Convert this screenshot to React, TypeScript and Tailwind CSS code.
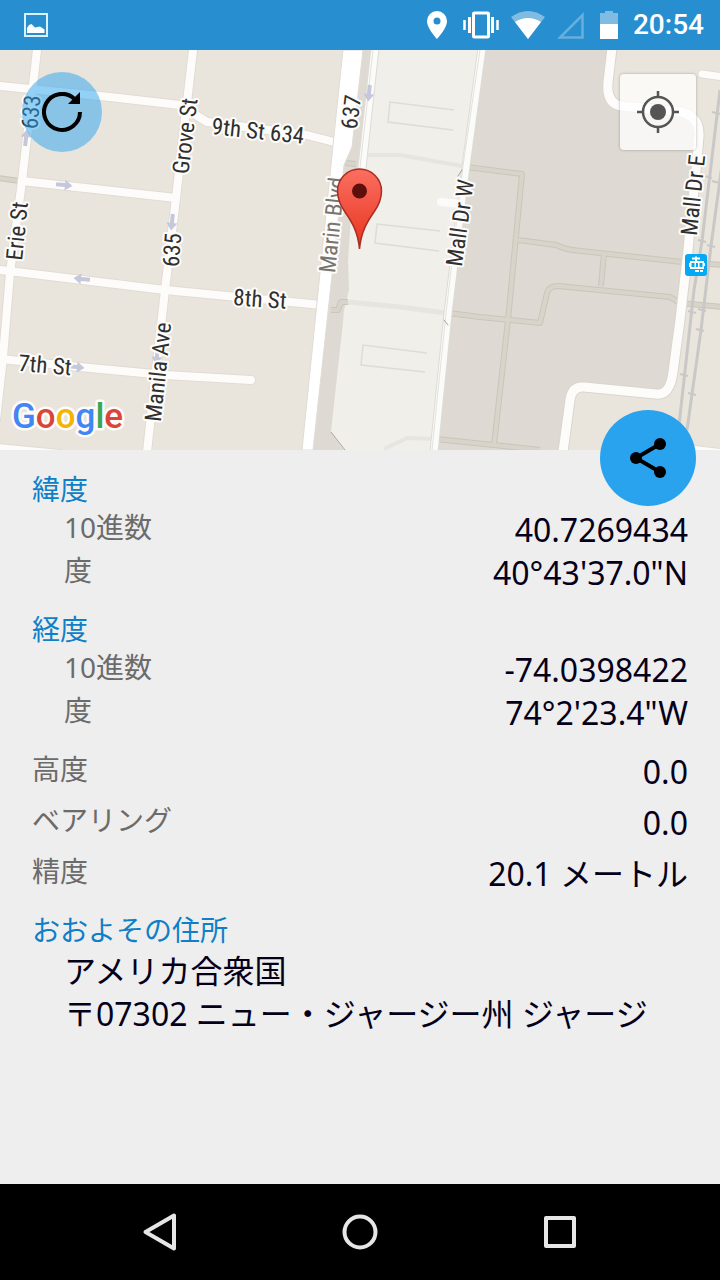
import React from "react";

type MapLabel = { text: string; x: number; y: number; angle: number; faded?: boolean };

const labels: MapLabel[] = [
  { text: "633", x: 31, y: 112, angle: -84 },
  { text: "Grove St", x: 185, y: 136, angle: -83 },
  { text: "9th St 634", x: 258, y: 131, angle: 6 },
  { text: "637", x: 351, y: 112, angle: -83 },
  { text: "Marin Blvd", x: 332, y: 225, angle: -84, faded: true },
  { text: "Mall Dr W", x: 460, y: 223, angle: -82 },
  { text: "Mall Dr E", x: 693, y: 195, angle: -84 },
  { text: "Erie St", x: 17, y: 231, angle: -84 },
  { text: "635", x: 172, y: 250, angle: -86 },
  { text: "8th St", x: 260, y: 299, angle: 4 },
  { text: "7th St", x: 45, y: 365, angle: 5 },
  { text: "Manila Ave", x: 158, y: 372, angle: -84 },
];

const roads: string[] = [
  "M37 50L22 181L10 273L3 357L-4 420",
  "M0 86L110 97L180 105L207 122L307 135L338 143",
  "M22 181L176 198",
  "M193 50L176 198L165 290L147 452",
  "M0 270L165 290L322 305",
  "M0 359L90 368L165 375L251 380",
  "M-4 448L60 454",
];

const mallRoad =
  "M612 48L608 82Q606 104 622 106L676 111Q700 114 699 136L696 170L688 250L680 320L673 372Q670 396 656 394L584 387Q572 386 570 400L563 452";

const footpaths: string[] = [
  "M-2 178L20 181",
  "M466 167L522 174L508 320L494 445",
  "M518 240L556 245Q564 249 572 250L682 262L722 265",
  "M604 253L601 286",
  "M448 313L480 317L540 323L547 293Q549 286 558 286L670 297L680 303L722 307",
  "M436 439L494 445L540 450",
  "M345 163L356 164",
  "M331 310L338 310L341 302L348 302",
];

const arrows = [
  { x: 64, y: 185, angle: 6 },
  { x: 172, y: 222, angle: 96 },
  { x: 82, y: 279, angle: 186 },
  { x: 76, y: 367, angle: 6 },
  { x: 26, y: 138, angle: -84 },
  { x: 369, y: 93, angle: 96 },
  { x: 157, y: 356, angle: 96 },
];

const railTicks = [
  [716, 113], [708, 177], [716, 182], [702, 241], [711, 246], [692, 312],
  [700, 330], [684, 375], [692, 394], [702, 310],
];

function StreetMap() {
  return (
    <svg
      viewBox="0 50 720 400"
      preserveAspectRatio="xMidYMid slice"
      className="block h-full w-full"
      role="img"
      aria-label="地図"
    >
      <rect x="-400" y="50" width="1520" height="400" fill="#e9e5dc" />
      <path d="M362 50H612L608 82Q606 104 622 106L676 111Q700 114 699 136L688 250L673 372Q670 396 656 394L584 387Q572 386 570 400L563 450H308L330 200L344 165Z" fill="#dedad3" />
      <path d="M376 50H484L434 450H344L331 432L343 322L344 310L349 290L348 262L352 200L362 160Z" fill="#f0efea" />
      <path d="M331 432L345 450" stroke="#aaa8a3" fill="none" />

      <g fill="none" stroke="#dddcd6" strokeWidth="1.5">
        <path d="M454 110L390 102L388 122L453 130" />
        <path d="M440 231L377 224L375 243L439 251" />
        <path d="M427 353L363 345L361 365L425 372" />
      </g>
      <path d="M368 155L400 155L462 166" stroke="#e6e5df" strokeWidth="4" fill="none" />
      <path d="M348 302L400 307L446 313" stroke="#e6e5df" strokeWidth="5" fill="none" />
      <path d="M384 449L407 438L434 439" stroke="#e6e5df" strokeWidth="4" fill="none" />

      <g fill="none" strokeLinejoin="round">
        {footpaths.map((d) => (
          <path key={d} d={d} stroke="#c8c6ba" strokeWidth="6" />
        ))}
        {footpaths.map((d) => (
          <path key={d} d={d} stroke="#d8d4ca" strokeWidth="4" />
        ))}
      </g>

      <g fill="none" stroke="#c9c8c6" strokeWidth="3">
        <path d="M720 90L702 241L694 290L679 425" />
        <path d="M724 150L711 246L701 330L687 430" />
        {railTicks.map(([x, y]) => (
          <path key={`${x}-${y}`} d={`M${x - 4} ${y - 1}L${x + 4} ${y + 1}`} strokeWidth="2" />
        ))}
      </g>

      <g fill="none" strokeLinejoin="round" strokeLinecap="round">
        {roads.map((d) => (
          <path key={d} d={d} stroke="#e0dcd3" strokeWidth="10" />
        ))}
        <path d={mallRoad} stroke="#d9d5cd" strokeWidth="11" />
        <path d="M702 74L724 77M690 449L724 453" stroke="#e0dcd3" strokeWidth="9" />
        {roads.map((d) => (
          <path key={d} d={d} stroke="#fdfcfa" strokeWidth="8" />
        ))}
        <path d={mallRoad} stroke="#fdfcfa" strokeWidth="9" />
        <path d="M702 74L724 77M690 449L724 453" stroke="#fdfcfa" strokeWidth="7" />
        <path d="M375 48L362 168M482 48L466 166L448 313L434 452" stroke="#dddbd5" strokeWidth="9" />
        <path d="M375 48L362 168M482 48L466 166L448 313L434 452" stroke="#fbfbf9" strokeWidth="7" />
        <path d="M373 50L360 168M480 50L463 166L446 313L432 450" stroke="#e3e1db" />
        <path d="M441 202L460 204" stroke="#fbfbf9" strokeWidth="8" />
        <path d="M444 320L448 325M458 176L462 170" stroke="#a5a39e" />
      </g>
      <path d="M343 50H363L352 147L344 165L313 450H302L331 165L333 145Z" fill="#ffffff" stroke="#e0dcd5" />

      {arrows.map(({ x, y, angle }) => (
        <path
          key={`${x}-${y}`}
          d="M-8 -2H1V-5.500L8.500 0L1 5.500V2H-8Z"
          fill="#c5c7da"
          transform={`translate(${x} ${y}) rotate(${angle})`}
        />
      ))}

      <g
        fontFamily="'Roboto Condensed', Roboto, sans-serif"
        fontSize="23"
        textAnchor="middle"
        stroke="#fdfcfa"
        strokeWidth="4"
        strokeLinejoin="round"
        paintOrder="stroke"
      >
        {labels.map(({ text, x, y, angle, faded }) => (
          <text
            key={text}
            y="8"
            fill={faded ? "#77756f" : "#2f2f2f"}
            transform={`translate(${x} ${y}) rotate(${angle})`}
          >
            {text}
          </text>
        ))}
      </g>

      <g>
        <rect x="685" y="254" width="22" height="22" rx="3" fill="#03a9f4" />
        <path d="M692 258.500H700M696 256.500V262" stroke="#fff" strokeWidth="2" />
        <path d="M690 261H704V263H705V266H704V269H690V267H689V263H690Z" fill="#fff" />
        <path d="M691.500 263H694.500V267H691.500ZM696 263H698V267H696ZM699.500 263H702.500V267H699.500Z" fill="#03a9f4" />
        <path d="M695 271H699M700 271H703" stroke="#fff" strokeWidth="2" />
      </g>

      <defs>
        <linearGradient id="pin" x1="0" y1="0" x2="0" y2="1">
          <stop offset="0" stopColor="#fb6f60" />
          <stop offset="1" stopColor="#e8331f" />
        </linearGradient>
      </defs>
      <path
        d="M359.500 249C358 232 352 222 345 212C340 205 337.500 199 337.500 191A22 22 0 0 1 381.500 191C381.500 199 379 205 374 212C367 222 361 232 359.500 249Z"
        fill="url(#pin)"
        stroke="#a82d22"
        strokeWidth="1.500"
      />
      <circle cx="359.500" cy="191" r="7.500" fill="#5c0f0b" />

      <text
        x="12"
        y="428"
        fontFamily="Roboto, sans-serif"
        fontSize="35"
        fontWeight="500"
        stroke="#fdfcfa"
        strokeWidth="5"
        strokeLinejoin="round"
        paintOrder="stroke"
      >
        <tspan fill="#4285f4">G</tspan>
        <tspan fill="#db4437">o</tspan>
        <tspan fill="#f4b400">o</tspan>
        <tspan fill="#4285f4">g</tspan>
        <tspan fill="#3aa757">l</tspan>
        <tspan fill="#db4437">e</tspan>
      </text>
    </svg>
  );
}

function StatusBar() {
  return (
    <header className="flex h-[50px] shrink-0 items-center justify-between bg-[#278ecf] pr-4 pl-6 text-white">
      <svg className="size-6" viewBox="0 0 24 24" aria-hidden="true">
        <rect x="1" y="1" width="22" height="22" fill="none" stroke="#d9f1fb" strokeWidth="2" />
        <path d="M3 20V15L5 12L7.500 11L11 14.500L16 13.500L20.500 16.500V20Z" fill="#fff" />
      </svg>
      <div className="flex items-center gap-3">
        <svg className="h-7 w-7" viewBox="0 0 28 28" aria-hidden="true">
          <path fillRule="evenodd" d="M14 0A10 10 0 0 0 4 10C4 17.500 14 28 14 28S24 17.500 24 10A10 10 0 0 0 14 0ZM14 6.500A3.500 3.500 0 1 1 14 13.500A3.500 3.500 0 0 1 14 6.500Z" fill="#fff" />
        </svg>
        <svg className="h-7 w-9" viewBox="0 0 36 28" fill="none" stroke="#fff" aria-hidden="true">
          <rect x="10.500" y="2" width="15" height="24" rx="1" strokeWidth="3" />
          <path d="M6.500 6V22M29.500 6V22" strokeWidth="3" />
          <path d="M1.500 9V19M34.500 9V19" strokeWidth="2.500" />
        </svg>
        <svg className="h-7 w-[34px]" viewBox="0 0 34 28" aria-hidden="true">
          <path d="M0 6Q17 -6 34 6L17 28Z" fill="#80bbe2" />
          <path d="M4 11Q17 3 30 11L17 28Z" fill="#fff" />
        </svg>
        <svg className="h-7 w-7" viewBox="0 0 28 28" aria-hidden="true">
          <path d="M3 26.500H25.500V4Z" fill="none" stroke="#68aede" strokeWidth="2.500" />
        </svg>
        <svg className="h-7 w-6" viewBox="0 0 24 28" aria-hidden="true">
          <path d="M3 2H8V-1H16V2H21V14H3Z" fill="#80bbe2" />
          <path d="M3 13H21V28H3Z" fill="#fff" />
        </svg>
        <time className="font-['Roboto',sans-serif] text-[28px] leading-8 font-medium">20:54</time>
      </div>
    </header>
  );
}

function Heading({ children }: { children: React.ReactNode }) {
  return <h2 className="text-[28px] leading-[38px] text-[#0f7fc8]">{children}</h2>;
}

function Row({ label, value }: { label: string; value: string }) {
  return (
    <div className="flex h-[43px] items-start justify-between">
      <dt className="text-[28px] leading-[38px] text-[#6b6b6b]">{label}</dt>
      <dd className="text-[32px] leading-[43px] text-[#050019]">{value}</dd>
    </div>
  );
}

export default function App() {
  return (
    <div className="flex min-h-screen flex-col bg-[#eeeeee] font-['Noto_Sans','Noto_Sans_CJK_JP',sans-serif]" lang="ja">
      <StatusBar />
      <section className="relative h-[400px] shrink-0">
        <StreetMap />
        <button
          type="button"
          aria-label="更新"
          className="absolute top-[22px] left-[22px] flex size-20 items-center justify-center rounded-full bg-[#2aa3ef]/50"
        >
          <svg className="size-10" viewBox="0 0 40 40" aria-hidden="true">
            <path d="M38 20A18 18 0 1 1 32 6.500" fill="none" stroke="#000" strokeWidth="4" />
            <path d="M38 0V12H26Z" fill="#000" />
          </svg>
        </button>
        <button
          type="button"
          aria-label="現在地"
          className="absolute top-6 right-6 flex size-[76px] items-center justify-center rounded-sm bg-white/75 shadow-[0_0_3px_rgba(0,0,0,0.3)]"
        >
          <svg className="size-[42px]" viewBox="0 0 42 42" fill="none" stroke="#555" aria-hidden="true">
            <circle cx="21" cy="21" r="15" strokeWidth="2.500" />
            <circle cx="21" cy="21" r="8" fill="#555" stroke="none" />
            <path d="M21 0V6M21 36V42M0 21H6M36 21H42" strokeWidth="2.500" />
          </svg>
        </button>
        <button
          type="button"
          aria-label="共有"
          className="absolute right-6 -bottom-14 flex size-24 items-center justify-center rounded-full bg-[#2aa3ef]"
        >
          <svg className="h-10 w-9" viewBox="0 0 36 40" aria-hidden="true">
            <path d="M30 6L6 20L30 34" fill="none" stroke="#000" strokeWidth="4" />
            <circle cx="30" cy="6" r="6" />
            <circle cx="6" cy="20" r="6" />
            <circle cx="30" cy="34" r="6" />
          </svg>
        </button>
      </section>

      <main className="flex grow flex-col gap-4 px-8 pt-5 pb-8">
        <section>
          <Heading>緯度</Heading>
          <dl className="pl-8">
            <Row label="10進数" value="40.7269434" />
            <Row label="度" value={"40°43'37.0\"N"} />
          </dl>
        </section>
        <section>
          <Heading>経度</Heading>
          <dl className="pl-8">
            <Row label="10進数" value="-74.0398422" />
            <Row label="度" value={"74°2'23.4\"W"} />
          </dl>
        </section>
        <dl className="flex flex-col gap-2">
          <Row label="高度" value="0.0" />
          <Row label="ベアリング" value="0.0" />
          <Row label="精度" value="20.1 メートル" />
        </dl>
        <section>
          <Heading>おおよその住所</Heading>
          <address className="pl-8 text-[32px] leading-[43px] whitespace-nowrap text-[#050019] not-italic">
            アメリカ合衆国
            <br />
            〒07302 ニュー・ジャージー州 ジャージ
          </address>
        </section>
      </main>

      <nav className="grid h-24 shrink-0 grid-cols-3 bg-black px-[60px]">
        <button type="button" aria-label="戻る" className="flex items-center justify-center">
          <svg className="size-10" viewBox="0 0 40 40" fill="none" stroke="#e6e6e6" strokeWidth="4" strokeLinejoin="round" aria-hidden="true">
            <path d="M34 3.500V36.500L5.500 20Z" />
          </svg>
        </button>
        <button type="button" aria-label="ホーム" className="flex items-center justify-center">
          <svg className="size-10" viewBox="0 0 40 40" fill="none" stroke="#e6e6e6" strokeWidth="4" aria-hidden="true">
            <circle cx="20" cy="20" r="15.500" />
          </svg>
        </button>
        <button type="button" aria-label="最近使用したアプリ" className="flex items-center justify-center">
          <svg className="size-10" viewBox="0 0 40 40" fill="none" stroke="#e6e6e6" strokeWidth="4" strokeLinejoin="round" aria-hidden="true">
            <rect x="6" y="6" width="28" height="28" />
          </svg>
        </button>
      </nav>
    </div>
  );
}
